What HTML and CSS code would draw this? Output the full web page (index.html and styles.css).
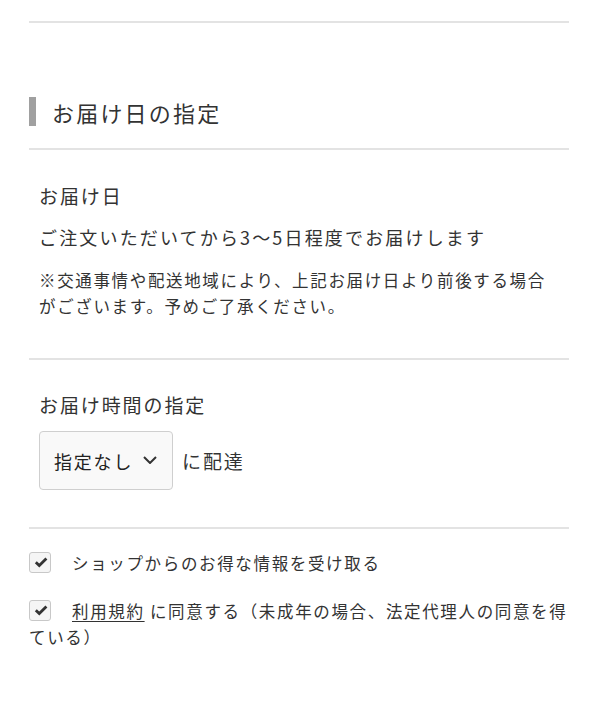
FILE: index.html
```html
<!DOCTYPE html>
<html lang="ja">
<head>
  <meta charset="UTF-8">
  <title>お届け日の指定</title>
  <link rel="stylesheet" href="styles.css">
</head>
<body>
  <div class="page">
    <div class="rule rule-top"></div>

    <h2 class="block-title">お届け日の指定</h2>
    <div class="rule"></div>

    <div class="field">
      <div class="field-label">お届け日</div>
      <p class="field-main">ご注文いただいてから3〜5日程度でお届けします</p>
      <p class="field-note">※交通事情や配送地域により、上記お届け日より前後する場合がございます。予めご了承ください。</p>
    </div>

    <div class="rule rule-mid"></div>

    <div class="field">
      <div class="field-label field-label-time">お届け時間の指定</div>
      <div class="select-row">
        <div class="select-wrap">
          <select class="select">
            <option>指定なし</option>
            <option>午前中</option>
            <option>14時〜16時</option>
            <option>16時〜18時</option>
          </select>
          <svg class="select-arrow" width="14" height="8" viewBox="0 0 14 8">
            <path d="M1 1 L7 7 L13 1" fill="none" stroke="#333" stroke-width="2"/>
          </svg>
        </div>
        <span class="select-suffix">に配達</span>
      </div>
    </div>

    <div class="rule rule-bottom"></div>

    <div class="checks">
      <label class="check">
        <span class="check-box">
          <svg width="14" height="11" viewBox="0 0 14 11">
            <path d="M1.8 5.2 L5.3 8.6 L12.4 1.6" fill="none" stroke="#333" stroke-width="2.8"/>
          </svg>
        </span>ショップからのお得な情報を受け取る
      </label>
      <label class="check check-terms">
        <span class="check-box">
          <svg width="14" height="11" viewBox="0 0 14 11">
            <path d="M1.8 5.2 L5.3 8.6 L12.4 1.6" fill="none" stroke="#333" stroke-width="2.8"/>
          </svg>
        </span><a href="#" class="terms-link">利用規約</a> に同意する（未成年の場合、法定代理人の同意を得ている）
      </label>
    </div>
  </div>
</body>
</html>
```

FILE: styles.css
```css
* {
  margin: 0;
  padding: 0;
  box-sizing: border-box;
}

body {
  font-family: "Noto Sans CJK JP", "Noto Sans", sans-serif;
  color: #333;
  background: #fff;
}

.page {
  padding: 0 29px 40px;
}

/* 区切り線 */
.rule {
  height: 2px;
  background: #e3e3e3;
}

.rule-top {
  margin-top: 21px;
}

.rule-mid {
  margin-top: 39px;
}

.rule-bottom {
  margin-top: 37px;
}

/* 見出し */
.block-title {
  display: flex;
  align-items: center;
  margin-top: 74px;
  margin-bottom: 22px;
  height: 29px;
  font-size: 22px;
  font-weight: 400;
  letter-spacing: 0.1em;
}

.block-title::before {
  content: '';
  width: 7px;
  height: 29px;
  margin-right: 16px;
  background: #a0a0a0;
}

/* 項目 */
.field {
  padding: 0 10px;
}

.field-label {
  margin-top: 31px;
  font-size: 19px;
  line-height: 30px;
  letter-spacing: 0.1em;
}

.field-label-time {
  margin-top: 30px;
}

.field-main {
  margin-top: 12px;
  font-size: 18px;
  line-height: 28px;
  letter-spacing: 0.12em;
}

.field-note {
  margin-top: 16px;
  font-size: 16.5px;
  line-height: 26px;
  letter-spacing: 0.1em;
}

/* セレクト */
.select-row {
  display: flex;
  align-items: center;
  margin-top: 11px;
}

.select-wrap {
  position: relative;
}

.select {
  appearance: none;
  -webkit-appearance: none;
  width: 134px;
  height: 59px;
  padding: 0 0 0 14px;
  border: 1px solid #cfcfcf;
  border-radius: 4px;
  background: #f9f9f9;
  font-family: inherit;
  font-size: 18px;
  letter-spacing: 0.1em;
  color: #222;
}

.select-arrow {
  position: absolute;
  top: 25px;
  left: 104px;
  pointer-events: none;
}

.select-suffix {
  margin-left: 9px;
  font-size: 19px;
  letter-spacing: 0.1em;
}

/* チェックボックス */
.checks {
  margin-top: 21px;
}

.check {
  display: block;
  font-size: 16.5px;
  line-height: 26px;
  letter-spacing: 0.1em;
}

.check-terms {
  margin-top: 22px;
}

.check-box {
  display: inline-block;
  width: 22px;
  height: 21px;
  margin-right: 21px;
  padding: 4px 0 0 4px;
  vertical-align: -3px;
  border: 1px solid #c8c8c8;
  border-radius: 3px;
  background: #f5f5f5;
}

.check-box svg {
  display: block;
}

.terms-link {
  color: #333;
  text-decoration: underline;
  text-underline-offset: 3px;
  text-decoration-thickness: 1px;
}
```
